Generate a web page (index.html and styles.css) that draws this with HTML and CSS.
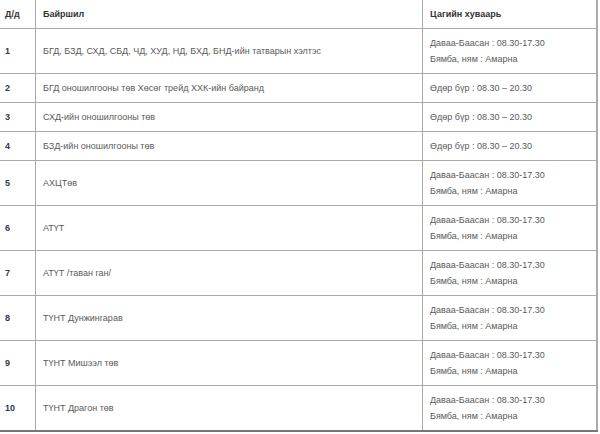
FILE: index.html
```html
<!DOCTYPE html>
<html>
<head>
<meta charset="utf-8">
<link rel="stylesheet" href="styles.css">
</head>
<body>
<table class="schedule">
  <thead>
    <tr>
      <th class="c-num">Д/д</th>
      <th class="c-place">Байршил</th>
      <th class="c-time">Цагийн хуваарь</th>
    </tr>
  </thead>
  <tbody>
    <tr>
      <td class="c-num">1</td>
      <td class="c-place">БГД, БЗД, СХД, СБД, ЧД, ХУД, НД, БХД, БНД-ийн татварын хэлтэс</td>
      <td class="c-time">Даваа-Баасан : 08.30-17.30<br>Бямба, ням : Амарна</td>
    </tr>
    <tr>
      <td class="c-num">2</td>
      <td class="c-place">БГД оношилгооны төв Хөсөг трейд ХХК-ийн байранд</td>
      <td class="c-time">Өдөр бүр : 08.30 – 20.30</td>
    </tr>
    <tr>
      <td class="c-num">3</td>
      <td class="c-place">СХД-ийн оношилгооны төв</td>
      <td class="c-time">Өдөр бүр : 08.30 – 20.30</td>
    </tr>
    <tr>
      <td class="c-num">4</td>
      <td class="c-place">БЗД-ийн оношилгооны төв</td>
      <td class="c-time">Өдөр бүр : 08.30 – 20.30</td>
    </tr>
    <tr>
      <td class="c-num">5</td>
      <td class="c-place">АХЦТөв</td>
      <td class="c-time">Даваа-Баасан : 08.30-17.30<br>Бямба, ням : Амарна</td>
    </tr>
    <tr>
      <td class="c-num">6</td>
      <td class="c-place">АТҮТ</td>
      <td class="c-time">Даваа-Баасан : 08.30-17.30<br>Бямба, ням : Амарна</td>
    </tr>
    <tr>
      <td class="c-num">7</td>
      <td class="c-place">АТҮТ /таван ган/</td>
      <td class="c-time">Даваа-Баасан : 08.30-17.30<br>Бямба, ням : Амарна</td>
    </tr>
    <tr>
      <td class="c-num">8</td>
      <td class="c-place">ТҮНТ Дунжингарав</td>
      <td class="c-time">Даваа-Баасан : 08.30-17.30<br>Бямба, ням : Амарна</td>
    </tr>
    <tr>
      <td class="c-num">9</td>
      <td class="c-place">ТҮНТ Мишээл төв</td>
      <td class="c-time">Даваа-Баасан : 08.30-17.30<br>Бямба, ням : Амарна</td>
    </tr>
    <tr class="last">
      <td class="c-num">10</td>
      <td class="c-place">ТҮНТ Драгон төв</td>
      <td class="c-time">Даваа-Баасан : 08.30-17.30<br>Бямба, ням : Амарна</td>
    </tr>
  </tbody>
</table>
</body>
</html>
```
FILE: styles.css
```css
html, body {
  margin: 0;
  padding: 0;
  background: #fff;
}
body {
  font-family: "Liberation Sans", Arial, sans-serif;
  font-size: 9px;
  color: #5a5a5a;
}
.schedule {
  border-collapse: collapse;
  width: 598px;
  table-layout: fixed;
}
.schedule th,
.schedule td {
  text-align: left;
  vertical-align: middle;
  line-height: 16px;
  padding: 6px 7px;
  border-bottom: 1px solid #aaa;
  border-left: 1px solid #aaa;
}
.schedule th {
  font-weight: bold;
  color: #333;
  height: 16px;
}
.schedule .c-num {
  width: 30px;
  padding-left: 5px;
  padding-right: 0;
  border-left: none;
}
.schedule td.c-num {
  font-weight: bold;
  color: #2f3a4a;
}
.schedule .c-place {
  width: 372px;
}
.schedule .c-time {
  border-right: 2px solid #aaa;
}
.schedule tr.last td {
  border-bottom: 2px solid #777;
}
```
